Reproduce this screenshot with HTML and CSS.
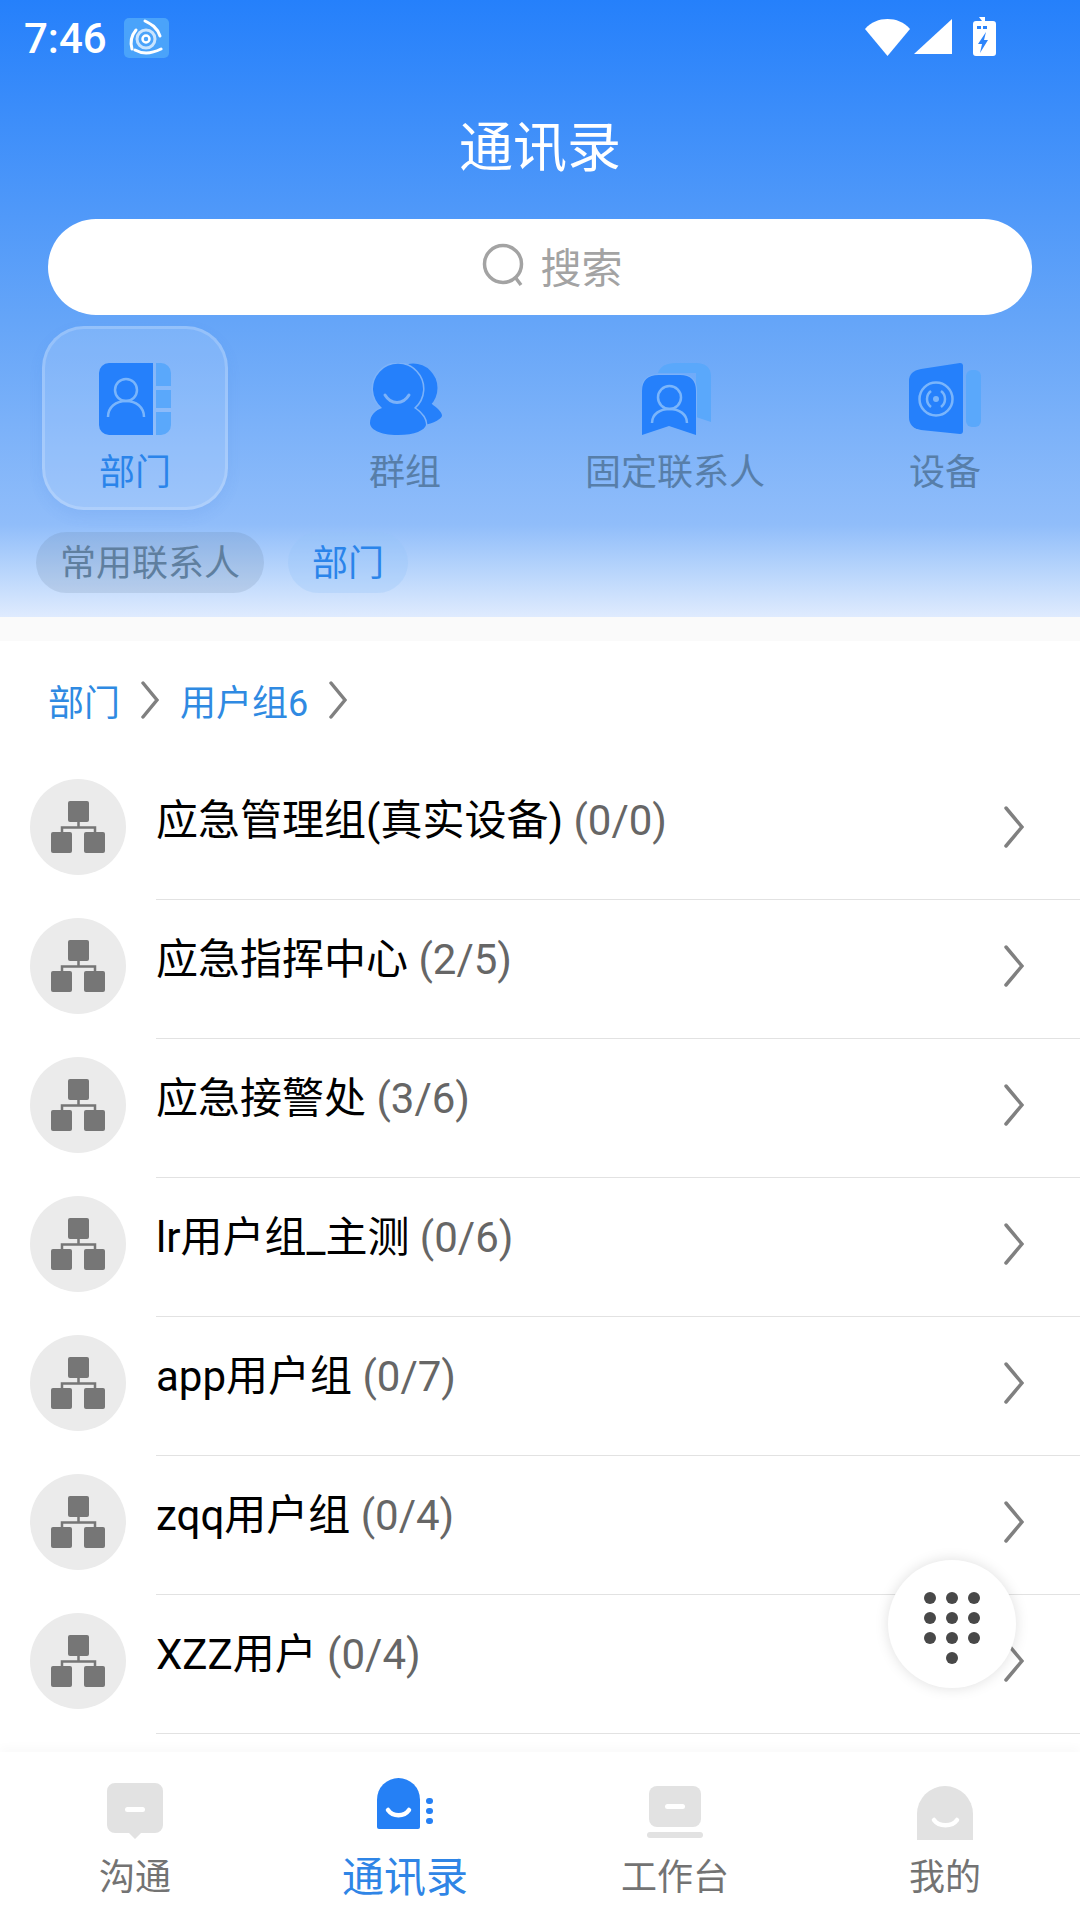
FILE: index.html
```html
<!DOCTYPE html>
<html lang="zh-CN">
<head>
    <meta charset="UTF-8">
    <title>通讯录</title>
    <link rel="stylesheet" href="styles.css">
</head>
<body>
    <div class="app">
        <div class="header">
            <div class="status-bar">
                <span class="clock">7:46</span>
                <svg class="app-logo" width="45" height="40" viewBox="0 0 45 40">
                    <rect width="45" height="40" rx="5" fill="#4aa3fa"/>
                    <g fill="none" stroke="#fff" stroke-linecap="round">
                        <circle cx="22" cy="21" r="3.500" stroke-width="2.500"/>
                        <circle cx="22" cy="21" r="9" stroke-width="3" opacity=".7"/>
                        <path d="M21 3c6 3 12 6 15 15" stroke-width="3"/>
                        <path d="M8 31c-2-7-1-13 4-19" stroke-width="3"/>
                        <path d="M11 32c7 4 16 4 26-1" stroke-width="3"/>
                    </g>
                </svg>
                <svg class="status-icons" width="131" height="39" viewBox="0 0 131 39" fill="#fff">
                    <path d="M0 12C6 5 14 2 22.500 2S39 5 45 12L22.500 39Z"/>
                    <path d="M49 37 87 2V37Z"/>
                    <path fill-rule="evenodd" d="M114 0h6v4h8a3 3 0 0 1 3 3v29a3 3 0 0 1-3 3h-17a3 3 0 0 1-3-3V7a3 3 0 0 1 3-3h6ZM112 9v3h4V9ZM118 9v3h4V9ZM121 15l-8 12h4l-2 9 8-13h-4Z"/>
                </svg>
            </div>
            <h1 class="title">通讯录</h1>
            <div class="search">
                <svg width="44" height="44" viewBox="0 0 44 44" fill="none" stroke="#a3a3a3" stroke-width="3.500">
                    <circle cx="21" cy="21" r="18.500"/>
                    <path d="M33 34l6 8"/>
                </svg>
                <span>搜索</span>
            </div>
            <div class="tabs">
                <div class="tab tab-active">
                    <svg class="tab-icon" width="72" height="72" viewBox="0 0 72 72">
                        <path fill="#2580fb" d="M10 0H54V72H10A10 10 0 0 1 0 62V10A10 10 0 0 1 10 0Z"/>
                        <path fill="#5aa8fb" d="M57 0h5a10 10 0 0 1 10 10V23H57ZM57 27H72V45H57ZM57 49H72V62a10 10 0 0 1-10 10H57Z"/>
                        <g fill="none" stroke="#7ab5fb" stroke-width="2.500">
                            <circle cx="27" cy="27" r="11"/>
                            <path d="M9 54C9 44 17 38 27 38S45 44 45 54"/>
                        </g>
                    </svg>
                    <span>部门</span>
                </div>
                <div class="tab">
                    <svg class="tab-icon" width="73" height="72" viewBox="0 0 73 72">
                        <circle cx="44" cy="25" r="24.500" fill="#2580fb"/>
                        <path fill="#2580fb" d="M52 30C58 36 60 38 64 42C70 46 73 50 73 53C72 57 60 62 50 63Z"/>
                        <path fill="#2580fb" stroke="#7cb2f9" stroke-width="3" paint-order="stroke" d="M29 72C10 72 1 66 1 60C1 52 7 47 13 45A25 25 0 1 1 45 45C51 49 57 55 57 62C56 67 46 72 29 72Z"/>
                        <path d="M16 32C22 42 34 42 40 32" fill="none" stroke="#7cb2f9" stroke-width="3" stroke-linecap="round"/>
                    </svg>
                    <span>群组</span>
                </div>
                <div class="tab">
                    <svg class="tab-icon tab-icon-shift" width="69" height="72" viewBox="0 0 69 72">
                        <path fill="#5aa8fb" d="M16 10Q19 0 34 0H54Q69 0 69 14V59L54 54V10Z"/>
                        <path fill="#2580fb" stroke="#7cb2f9" stroke-width="2" paint-order="stroke" d="M0 28Q0 12 17 12H38Q54 12 54 28V72L27 63 0 72Z"/>
                        <g fill="none" stroke="#7ab5fb" stroke-width="2.500">
                            <circle cx="27.500" cy="34.500" r="11.500"/>
                            <path d="M10 60C10 51 18 46 27.500 46S45 51 45 60"/>
                        </g>
                    </svg>
                    <span>固定联系人</span>
                </div>
                <div class="tab">
                    <svg class="tab-icon" width="72" height="72" viewBox="0 0 72 72">
                        <path fill="#2580fb" d="M12 6 51 0Q54 0 54 3V68Q54 71 51 71L12 67Q0 65 0 54V18Q0 8 12 6Z"/>
                        <rect x="57" y="7" width="15" height="57" rx="6" fill="#5aa8fb"/>
                        <g fill="none" stroke="#7ab5fb" stroke-width="2.500">
                            <circle cx="27" cy="36" r="16.500"/>
                            <path d="M22 28a10 10 0 0 0 0 16M32 28a10 10 0 0 1 0 16"/>
                        </g>
                        <circle cx="27" cy="36" r="3" fill="#7ab5fb"/>
                    </svg>
                    <span>设备</span>
                </div>
            </div>
            <div class="chips">
                <span class="chip chip-gray">常用联系人</span>
                <span class="chip chip-blue">部门</span>
            </div>
        </div>
        <div class="strip"></div>

        <div class="crumbs">
            <span>部门</span>
            <svg class="crumb-arrow" width="18" height="38" viewBox="0 0 18 38"><path d="M2 2 16 19 2 36"/></svg>
            <span>用户组6</span>
            <svg class="crumb-arrow" width="18" height="38" viewBox="0 0 18 38"><path d="M2 2 16 19 2 36"/></svg>
        </div>

        <div class="list">
            <div class="row">
                <div class="avatar"><svg width="54" height="52" viewBox="0 0 54 52"><use href="#org"/></svg></div>
                <div class="row-body"><p class="row-text">应急管理组(真实设备) <em>(0/0)</em></p><svg class="row-arrow" width="20" height="42" viewBox="0 0 20 42"><path d="M2 2 18 21 2 40"/></svg></div>
            </div>
            <div class="row">
                <div class="avatar"><svg width="54" height="52" viewBox="0 0 54 52"><use href="#org"/></svg></div>
                <div class="row-body"><p class="row-text">应急指挥中心 <em>(2/5)</em></p><svg class="row-arrow" width="20" height="42" viewBox="0 0 20 42"><path d="M2 2 18 21 2 40"/></svg></div>
            </div>
            <div class="row">
                <div class="avatar"><svg width="54" height="52" viewBox="0 0 54 52"><use href="#org"/></svg></div>
                <div class="row-body"><p class="row-text">应急接警处 <em>(3/6)</em></p><svg class="row-arrow" width="20" height="42" viewBox="0 0 20 42"><path d="M2 2 18 21 2 40"/></svg></div>
            </div>
            <div class="row">
                <div class="avatar"><svg width="54" height="52" viewBox="0 0 54 52"><use href="#org"/></svg></div>
                <div class="row-body"><p class="row-text">lr用户组_主测 <em>(0/6)</em></p><svg class="row-arrow" width="20" height="42" viewBox="0 0 20 42"><path d="M2 2 18 21 2 40"/></svg></div>
            </div>
            <div class="row">
                <div class="avatar"><svg width="54" height="52" viewBox="0 0 54 52"><use href="#org"/></svg></div>
                <div class="row-body"><p class="row-text">app用户组 <em>(0/7)</em></p><svg class="row-arrow" width="20" height="42" viewBox="0 0 20 42"><path d="M2 2 18 21 2 40"/></svg></div>
            </div>
            <div class="row">
                <div class="avatar"><svg width="54" height="52" viewBox="0 0 54 52"><use href="#org"/></svg></div>
                <div class="row-body"><p class="row-text">zqq用户组 <em>(0/4)</em></p><svg class="row-arrow" width="20" height="42" viewBox="0 0 20 42"><path d="M2 2 18 21 2 40"/></svg></div>
            </div>
            <div class="row">
                <div class="avatar"><svg width="54" height="52" viewBox="0 0 54 52"><use href="#org"/></svg></div>
                <div class="row-body"><p class="row-text">XZZ用户 <em>(0/4)</em></p><svg class="row-arrow" width="20" height="42" viewBox="0 0 20 42"><path d="M2 2 18 21 2 40"/></svg></div>
            </div>
        </div>

        <!-- dial pad button floats over the list -->
        <div class="fab">
            <svg width="56" height="78" viewBox="0 0 56 78" fill="#484848">
                <circle cx="6" cy="6" r="6"/><circle cx="28" cy="6" r="6"/><circle cx="50" cy="6" r="6"/>
                <circle cx="6" cy="26" r="6"/><circle cx="28" cy="26" r="6"/><circle cx="50" cy="26" r="6"/>
                <circle cx="6" cy="46" r="6"/><circle cx="28" cy="46" r="6"/><circle cx="50" cy="46" r="6"/>
                <circle cx="28" cy="66" r="6"/>
            </svg>
        </div>

        <div class="nav">
            <div class="nav-item">
                <svg class="nav-icon" width="56" height="64" viewBox="0 0 56 64">
                    <path fill="#e2e2e2" d="M8 6H48A8 8 0 0 1 56 14V48A8 8 0 0 1 48 56H34L28 62 22 56H8A8 8 0 0 1 0 48V14A8 8 0 0 1 8 6Z"/>
                    <rect x="18" y="30" width="20" height="5" rx="2.500" fill="#fff"/>
                </svg>
                <span>沟通</span>
            </div>
            <div class="nav-item nav-active">
                <svg class="nav-icon" width="56" height="64" viewBox="0 0 56 64">
                    <path fill="#2580f5" d="M0 22.500A21.500 21.500 0 0 1 43 22.500V50Q43 52 41 52H2Q0 52 0 50Z"/>
                    <path d="M11 33C16 40 27 40 32 33" fill="none" stroke="#fff" stroke-width="4.500" stroke-linecap="round"/>
                    <rect x="49" y="21" width="7" height="6" rx="3" fill="#2580f5"/>
                    <rect x="49" y="31" width="7" height="6" rx="3" fill="#2580f5"/>
                    <rect x="49" y="41" width="7" height="6" rx="3" fill="#2580f5"/>
                </svg>
                <span>通讯录</span>
            </div>
            <div class="nav-item">
                <svg class="nav-icon" width="56" height="64" viewBox="0 0 56 64">
                    <rect x="2" y="9" width="52" height="41" rx="8" fill="#e2e2e2"/>
                    <rect x="18" y="27" width="20" height="5" rx="2.500" fill="#fff"/>
                    <rect y="55" width="56" height="6" rx="3" fill="#e2e2e2"/>
                </svg>
                <span>工作台</span>
            </div>
            <div class="nav-item">
                <svg class="nav-icon" width="56" height="64" viewBox="0 0 56 64">
                    <path fill="#e2e2e2" d="M0 37A28 28 0 0 1 56 37V63H0Z"/>
                    <path d="M17 43C22 50 35 50 40 43" fill="none" stroke="#fff" stroke-width="4.500" stroke-linecap="round"/>
                </svg>
                <span>我的</span>
            </div>
        </div>
    </div>

    <svg class="defs" width="0" height="0">
        <defs>
            <g id="org">
                <rect x="17" y="0" width="21" height="21" rx="2" fill="#767676"/>
                <rect x="0" y="31" width="21" height="21" rx="2" fill="#767676"/>
                <rect x="33" y="31" width="21" height="21" rx="2" fill="#767676"/>
                <path d="M27.500 21V26M11 31V26.500H44V31" fill="none" stroke="#767676" stroke-width="2.500"/>
            </g>
        </defs>
    </svg>
</body>
</html>
```

FILE: styles.css
```css
* {
    margin: 0;
    padding: 0;
    box-sizing: border-box;
}

body {
    font-family: Roboto, 'Noto Sans CJK SC', sans-serif;
    background: #fff;
    color: #000;
}

.app {
    position: relative;
    width: 1080px;
    height: 1920px;
    overflow: hidden;
    display: flex;
    flex-direction: column;
}

.defs {
    position: absolute;
}

/* Blue header */
.header {
    height: 617px;
    flex-shrink: 0;
    background: linear-gradient(180deg, #2580fb 0%, #65a5f8 52%, #90bdfa 85%, #bad6fc 93%, #dfebfe 100%);
}

.status-bar {
    height: 72px;
    padding: 0 84px 0 24px;
    display: flex;
    align-items: center;
    color: #fff;
}

.clock {
    margin-top: 5px;
    font-size: 42px;
    font-weight: 500;
    line-height: 1;
}

.app-logo {
    margin: 4px 0 0 17px;
}

.status-icons {
    margin: 0 0 0 auto;
}

.title {
    height: 147px;
    padding-bottom: 4px;
    display: flex;
    align-items: center;
    justify-content: center;
    color: #fff;
    font-size: 54px;
    font-weight: 400;
}

.search {
    height: 96px;
    margin: 0 48px;
    background: #fff;
    border-radius: 48px;
    display: flex;
    align-items: center;
    justify-content: center;
    gap: 15px;
    padding: 0 0 4px 24px;
    color: #a3a3a3;
    font-size: 41px;
}

.tabs {
    display: grid;
    grid-template-columns: repeat(4, 270px);
    margin-top: 11px;
}

.tab {
    width: 186px;
    height: 184px;
    justify-self: center;
    padding-top: 34px;
    display: flex;
    flex-direction: column;
    align-items: center;
    border: 3px solid transparent;
    border-radius: 42px;
    white-space: nowrap;
    color: #577ea9;
    font-size: 36px;
    line-height: 50px;
}

.tab-icon {
    display: block;
    margin-bottom: 13px;
}

.tab-icon-shift {
    margin-left: 3px;
}

.tab-active {
    border-color: rgba(255, 255, 255, 0.18);
    background: rgba(255, 255, 255, 0.15);
    box-shadow: 0 6px 14px rgba(60, 120, 220, 0.1);
    color: #2a84ea;
}

.chips {
    display: flex;
    gap: 24px;
    margin: 22px 0 0 36px;
}

.chip {
    height: 61px;
    padding: 0 24px;
    border-radius: 31px;
    font-size: 36px;
    line-height: 65px;
}

.chip-gray {
    background: rgba(90, 110, 140, 0.16);
    color: #5f7f9f;
}

.chip-blue {
    background: rgba(150, 195, 250, 0.3);
    color: #2a84ea;
}

.strip {
    height: 24px;
    flex-shrink: 0;
    background: #fafafa;
}

/* Breadcrumb */
.crumbs {
    height: 118px;
    flex-shrink: 0;
    padding-left: 48px;
    display: flex;
    align-items: center;
    color: #2f8ae2;
    font-size: 36px;
}

.crumb-arrow {
    margin: 0 21px;
}

.crumb-arrow path,
.row-arrow path {
    fill: none;
    stroke: #808080;
    stroke-width: 3.5;
    stroke-linecap: round;
    stroke-linejoin: miter;
}

/* Group list */
.list {
    margin-top: 2px;
}

.row {
    height: 139px;
    display: flex;
    flex-shrink: 0;
}

.avatar {
    width: 96px;
    height: 96px;
    margin: 18px 30px 0;
    flex-shrink: 0;
    border-radius: 50%;
    background: #ebebeb;
    display: flex;
    align-items: center;
    justify-content: center;
}

.row-body {
    flex: 1;
    display: flex;
    align-items: flex-start;
    justify-content: space-between;
    padding: 31px 56px 0 0;
    border-bottom: 1.5px solid #e2e2e2;
}

.row-text {
    font-size: 42px;
    line-height: 58px;
}

.row-text em {
    font-style: normal;
    color: #666;
}

.row-arrow {
    margin-top: 14px;
}

/* Dial pad */
.fab {
    position: absolute;
    left: 888px;
    top: 1560px;
    width: 128px;
    height: 128px;
    border-radius: 50%;
    background: #fff;
    box-shadow: 0 0 14px rgba(0, 0, 0, 0.13);
    display: flex;
    align-items: center;
    justify-content: center;
    padding-top: 14px;
}

/* Bottom navigation */
.nav {
    position: absolute;
    left: 0;
    right: 0;
    bottom: 0;
    height: 168px;
    background: #fff;
    box-shadow: 0 -6px 8px rgba(0, 0, 0, 0.02);
    display: grid;
    grid-template-columns: repeat(4, 270px);
}

.nav-item {
    padding-top: 25px;
    display: flex;
    flex-direction: column;
    align-items: center;
    color: #737373;
    font-size: 36px;
    line-height: 50px;
}

.nav-icon {
    display: block;
    margin-bottom: 12px;
}

.nav-active {
    color: #2f85e6;
    font-size: 42px;
}
```
